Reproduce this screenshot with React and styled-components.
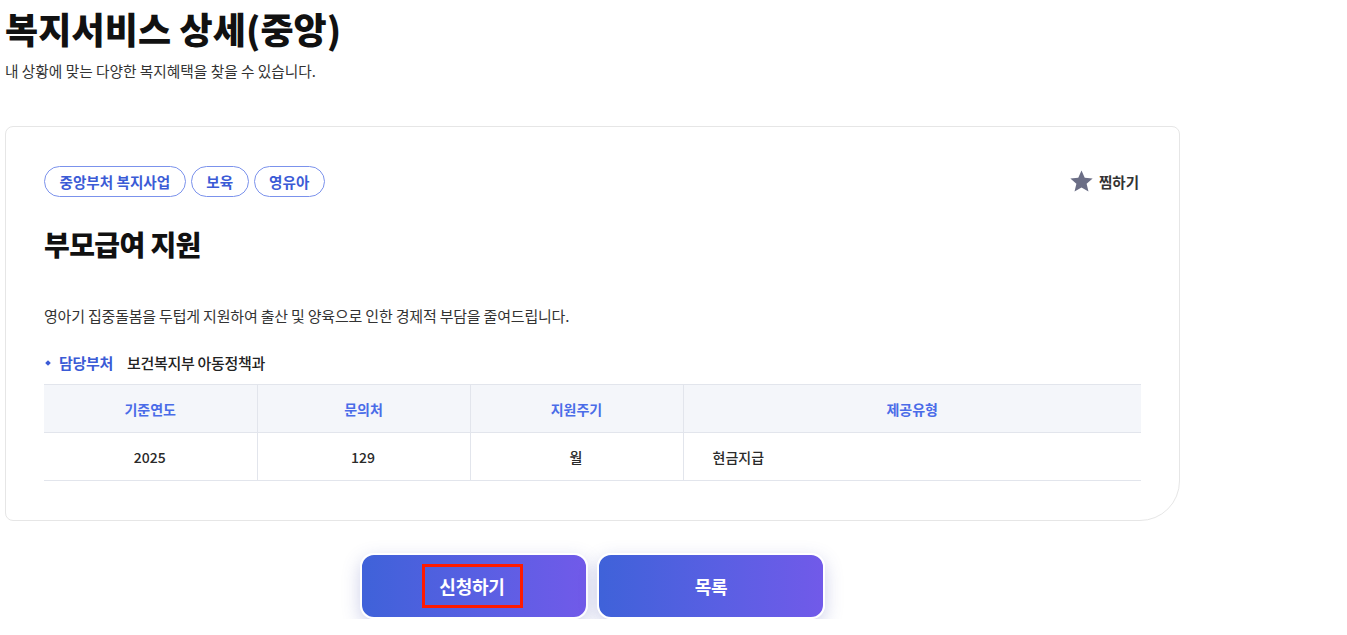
import React from "react";
import styled, { createGlobalStyle } from "styled-components";

const Global = createGlobalStyle`
  html, body { margin: 0; padding: 0; background: #fff; }
  body { font-family: "Noto Sans CJK KR", "Noto Sans", sans-serif; color: #111; }
  * { box-sizing: border-box; }
`;

const Page = styled.div`
  width: 1180px;
  padding: 0 0 0 5px;
`;

const Title = styled.h1`
  margin: 0;
  padding-top: 4px;
  font-size: 36px;
  font-weight: 800;
  line-height: 48px;
  letter-spacing: 0.1px;
  color: #111;
`;

const Subtitle = styled.p`
  margin: 9px 0 0;
  font-size: 14.7px;
  line-height: 20px;
  color: #333;
  letter-spacing: 0;
`;

const Card = styled.section`
  margin-top: 45px;
  border: 1px solid #e6e6e6;
  border-radius: 8px 8px 40px 8px;
  padding: 39px 38px 39px 38px;
  background: #fff;
`;

const TopRow = styled.div`
  display: flex;
  align-items: center;
  justify-content: space-between;
`;

const Tags = styled.div`
  display: flex;
  gap: 5px;
`;

const Tag = styled.span`
  display: inline-flex;
  align-items: center;
  height: 31px;
  padding: 0 14.5px;
  border: 1.5px solid #7b92ec;
  border-radius: 16px;
  font-size: 14.6px;
  font-weight: 600;
  color: #3b5bd6;
  letter-spacing: 0;
`;

const Bookmark = styled.button`
  display: flex;
  align-items: center;
  gap: 5px;
  background: none;
  border: 0;
  padding: 0;
  margin-right: 2px;
  font-family: inherit;
  font-size: 14.5px;
  font-weight: 600;
  color: #333;
  cursor: pointer;
`;

const ServiceTitle = styled.h2`
  margin: 27px 0 0;
  font-size: 28px;
  font-weight: 800;
  line-height: 40px;
  letter-spacing: -0.6px;
  color: #111;
`;

const Desc = styled.p`
  margin: 41px 0 0;
  font-size: 15px;
  line-height: 22px;
  color: #333;
  letter-spacing: -0.2px;
`;

const InfoRow = styled.div`
  display: flex;
  align-items: center;
  margin-top: 25px;
  font-size: 15px;
  line-height: 22px;
  letter-spacing: -0.3px;
`;

const InfoLabel = styled.span`
  position: relative;
  padding-left: 15px;
  color: #3b5bd6;
  font-weight: 700;
  margin-right: 14px;
  &::before {
    content: "";
    position: absolute;
    left: 2px;
    top: 9px;
    width: 4px;
    height: 4px;
    background: #3b5bd6;
    transform: rotate(45deg);
  }
`;

const InfoValue = styled.span`
  color: #222;
  font-weight: 500;
`;

const Table = styled.table`
  width: 100%;
  margin-top: 10px;
  border-collapse: collapse;
  table-layout: fixed;
  border-top: 1px solid #e2e5ec;
  border-bottom: 1px solid #e2e5ec;
`;

const Th = styled.th`
  height: 48px;
  background: #f4f6fa;
  color: #4a6ce8;
  font-size: 14px;
  font-weight: 600;
  text-align: center;
  border-left: 1px solid #e2e5ec;
  border-bottom: 1px solid #e2e5ec;
  &:first-child { border-left: 0; }
`;

const Td = styled.td`
  height: 48px;
  font-size: 14px;
  font-weight: 500;
  color: #2a2a2a;
  text-align: ${(p) => (p.$left ? "left" : "center")};
  padding-left: ${(p) => (p.$left ? "29px" : "0")};
  border-left: 1px solid #e2e5ec;
  &:first-child { border-left: 0; }
`;

const Actions = styled.div`
  display: flex;
  justify-content: center;
  gap: 9px;
  margin-top: 32px;
`;

const ActionButton = styled.button`
  width: 228px;
  height: 66px;
  border: 2.5px solid #fff;
  border-radius: 14px;
  background: linear-gradient(90deg, #3f62d9 0%, #5a5fe3 55%, #715ae9 100%);
  box-shadow: 0 6px 18px rgba(80, 90, 180, 0.28);
  color: #fff;
  font-family: inherit;
  font-size: 18px;
  font-weight: 700;
  letter-spacing: -0.2px;
  display: flex;
  align-items: center;
  justify-content: center;
  cursor: pointer;
`;

const FocusMark = styled.span`
  display: inline-flex;
  align-items: center;
  justify-content: center;
  width: 101px;
  height: 44px;
  margin-right: 4px;
  outline: 3px solid #ff1a00;
  outline-offset: -3px;
`;

const Star = () => (
  <svg width="25" height="25" viewBox="0 0 24 24">
    <path
      d="M12 1.5l3.1 7 7.6.7-5.8 5 1.8 7.5L12 17.8l-6.7 3.9 1.8-7.5-5.8-5 7.6-.7z"
      fill="#6b6e86"
    />
  </svg>
);

export default function App() {
  return (
    <>
      <Global />
      <Page>
        <Title>복지서비스 상세(중앙)</Title>
        <Subtitle>내 상황에 맞는 다양한 복지혜택을 찾을 수 있습니다.</Subtitle>
        <Card>
          <TopRow>
            <Tags>
              <Tag>중앙부처 복지사업</Tag>
              <Tag>보육</Tag>
              <Tag>영유아</Tag>
            </Tags>
            <Bookmark>
              <Star />
              찜하기
            </Bookmark>
          </TopRow>
          <ServiceTitle>부모급여 지원</ServiceTitle>
          <Desc>영아기 집중돌봄을 두텁게 지원하여 출산 및 양육으로 인한 경제적 부담을 줄여드립니다.</Desc>
          <InfoRow>
            <InfoLabel>담당부처</InfoLabel>
            <InfoValue>보건복지부 아동정책과</InfoValue>
          </InfoRow>
          <Table>
            <colgroup>
              <col style={{ width: "213px" }} />
              <col style={{ width: "213px" }} />
              <col style={{ width: "213px" }} />
              <col />
            </colgroup>
            <thead>
              <tr>
                <Th>기준연도</Th>
                <Th>문의처</Th>
                <Th>지원주기</Th>
                <Th>제공유형</Th>
              </tr>
            </thead>
            <tbody>
              <tr>
                <Td>2025</Td>
                <Td>129</Td>
                <Td>월</Td>
                <Td $left>현금지급</Td>
              </tr>
            </tbody>
          </Table>
        </Card>
        <Actions>
          <ActionButton>
            <FocusMark>신청하기</FocusMark>
          </ActionButton>
          <ActionButton>목록</ActionButton>
        </Actions>
      </Page>
    </>
  );
}
